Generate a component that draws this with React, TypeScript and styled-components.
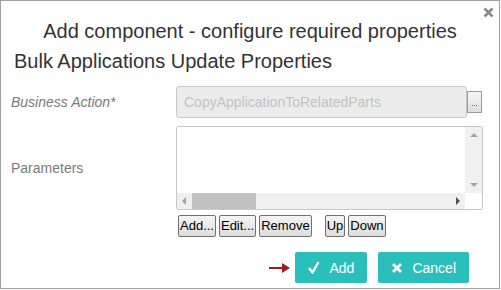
import styled, {createGlobalStyle} from 'styled-components';

const GlobalStyle = createGlobalStyle`
  html, body {
    margin: 0;
    padding: 0;
    background: #ffffff;
  }
  body {
    font-family: 'Liberation Sans', Arial, sans-serif;
  }
`;

const App = () => {
  return (
    <>
      <GlobalStyle />
      <Dialog>
        <CloseBtn aria-label="close">
          <svg width="11" height="11" viewBox="0 0 11 11">
            <path d="M1.5 1.5 L9.5 9.5 M9.5 1.5 L1.5 9.5" stroke="#8a8a8a" strokeWidth="2.6" />
          </svg>
        </CloseBtn>
        <Title>Add component - configure required properties</Title>
        <SubTitle>Bulk Applications Update Properties</SubTitle>
        <Form>
          <Row height={32}>
            <Label italic>Business Action*</Label>
            <Field>
              <ReadOnlyInput>CopyApplicationToRelatedParts</ReadOnlyInput>
              <BrowseBtn>
                <Dot color="#c06020" />
                <Dot color="#3080c0" />
                <Dot color="#2060a0" />
              </BrowseBtn>
            </Field>
          </Row>
          <Row height={84} top={8}>
            <Label>Parameters</Label>
            <ListBox>
              <ListContent />
              <VScroll>
                <Arrow dir="up" color="#a3a3a3" />
                <Arrow dir="down" color="#a3a3a3" />
              </VScroll>
              <HScroll>
                <Arrow dir="left" color="#a3a3a3" />
                <Track>
                  <Thumb />
                </Track>
                <Arrow dir="right" color="#505050" />
              </HScroll>
              <Corner />
            </ListBox>
          </Row>
          <ListButtons>
            <SmallBtn>Add...</SmallBtn>
            <SmallBtn>Edit...</SmallBtn>
            <SmallBtn>Remove</SmallBtn>
            <Spacer />
            <SmallBtn>Up</SmallBtn>
            <SmallBtn>Down</SmallBtn>
          </ListButtons>
        </Form>
        <Footer>
          <Pointer width="22" height="10" viewBox="0 0 22 10">
            <path d="M0 4 H13 V0 L21 5 L13 10 V6 H0 Z" fill="#a3191f" />
          </Pointer>
          <ActionBtn>
            <svg width="12" height="13" viewBox="0 0 12 13">
              <path d="M1 7 L4.5 11.5 L10.5 1" stroke="#ffffff" strokeWidth="2.4" fill="none" />
            </svg>
            Add
          </ActionBtn>
          <ActionBtn>
            <svg width="12" height="12" viewBox="0 0 12 12">
              <path d="M2 2 L10 10 M10 2 L2 10" stroke="#ffffff" strokeWidth="2.8" />
            </svg>
            Cancel
          </ActionBtn>
        </Footer>
      </Dialog>
    </>
  );
};

const Dialog = styled.div`
  position: relative;
  box-sizing: border-box;
  width: 500px;
  height: 289px;
  border: 1px solid #a0a0a0;
  background: #ffffff;
  padding: 18px 0 0 0;
  display: flex;
  flex-direction: column;
`;

const CloseBtn = styled.div`
  position: absolute;
  top: 6px;
  right: 5px;
  width: 11px;
  height: 11px;
  display: flex;
`;

const Title = styled.div`
  font-size: 20px;
  line-height: 24px;
  color: #333333;
  text-align: center;
`;

const SubTitle = styled.div`
  font-size: 20px;
  line-height: 24px;
  color: #333333;
  padding-left: 13px;
  margin-top: 6px;
`;

const Form = styled.div`
  display: flex;
  flex-direction: column;
  margin-top: 13px;
`;

const Row = styled.div<{height: number; top?: number}>`
  display: grid;
  grid-template-columns: 175px 1fr;
  align-items: center;
  height: ${p => p.height}px;
  margin-top: ${p => p.top ?? 0}px;
`;

const Label = styled.div<{italic?: boolean}>`
  font-size: 14px;
  color: #7a7a7a;
  padding-left: 10px;
  font-style: ${p => (p.italic ? 'italic' : 'normal')};
`;

const Field = styled.div`
  display: flex;
  align-items: center;
  height: 100%;
`;

const ReadOnlyInput = styled.div`
  box-sizing: border-box;
  width: 291px;
  height: 32px;
  border: 1px solid #c8c8c8;
  border-radius: 3px;
  background: #ececec;
  color: #c2c2c2;
  font-size: 14px;
  line-height: 30px;
  padding-left: 7px;
`;

const BrowseBtn = styled.div`
  box-sizing: border-box;
  width: 15px;
  height: 22px;
  border: 1px solid #9a9a9a;
  background: linear-gradient(#f6f6f6, #dedede);
  display: flex;
  align-items: flex-end;
  justify-content: center;
  gap: 1px;
  padding-bottom: 6px;
`;

const Dot = styled.span<{color: string}>`
  width: 1px;
  height: 1px;
  background: ${p => p.color};
`;

const ListBox = styled.div`
  box-sizing: border-box;
  width: 307px;
  height: 84px;
  border: 1px solid #c8c8c8;
  border-radius: 2px;
  display: grid;
  grid-template-columns: 1fr 17px;
  grid-template-rows: 1fr 16px;
`;

const ListContent = styled.div`
  background: #ffffff;
`;

const VScroll = styled.div`
  background: #f0f0f0;
  display: flex;
  flex-direction: column;
  justify-content: space-between;
  align-items: center;
  padding: 6px 0;
`;

const HScroll = styled.div`
  background: #f0f0f0;
  display: flex;
  align-items: center;
  padding: 0 5px 0 5px;
`;

const Track = styled.div`
  flex: 1;
  height: 100%;
  padding: 0 6px;
  display: flex;
  align-items: center;
`;

const Thumb = styled.div`
  width: 64px;
  height: 16px;
  background: #c1c1c1;
`;

const Corner = styled.div`
  background: #ffffff;
`;

const Arrow = styled.span<{dir: 'up' | 'down' | 'left' | 'right'; color: string}>`
  width: 0;
  height: 0;
  border-style: solid;
  ${p =>
    p.dir === 'up'
      ? `border-width: 0 4px 4px 4px; border-color: transparent transparent ${p.color} transparent;`
      : p.dir === 'down'
        ? `border-width: 4px 4px 0 4px; border-color: ${p.color} transparent transparent transparent;`
        : p.dir === 'left'
          ? `border-width: 4px 4px 4px 0; border-color: transparent ${p.color} transparent transparent;`
          : `border-width: 4px 0 4px 4px; border-color: transparent transparent transparent ${p.color};`}
`;

const ListButtons = styled.div`
  display: flex;
  gap: 3px;
  padding-left: 177px;
  margin-top: 5px;
`;

const SmallBtn = styled.div`
  box-sizing: border-box;
  height: 22px;
  border: 1px solid #707070;
  border-radius: 2px;
  background: linear-gradient(#f4f4f4, #dddddd);
  font-size: 13px;
  line-height: 20px;
  color: #000000;
  padding: 0 1px;
`;

const Spacer = styled.div`
  width: 7px;
`;

const Footer = styled.div`
  display: flex;
  justify-content: flex-end;
  align-items: center;
  gap: 11px;
  padding-right: 30px;
  margin-top: 15px;
`;

const Pointer = styled.svg`
  margin-right: -7px;
`;

const ActionBtn = styled.div`
  height: 31px;
  display: flex;
  align-items: center;
  gap: 9px;
  padding: 0 13px;
  background: #2bbfbb;
  border-radius: 2px;
  color: #ffffff;
  font-size: 14px;
`;

export default App;
